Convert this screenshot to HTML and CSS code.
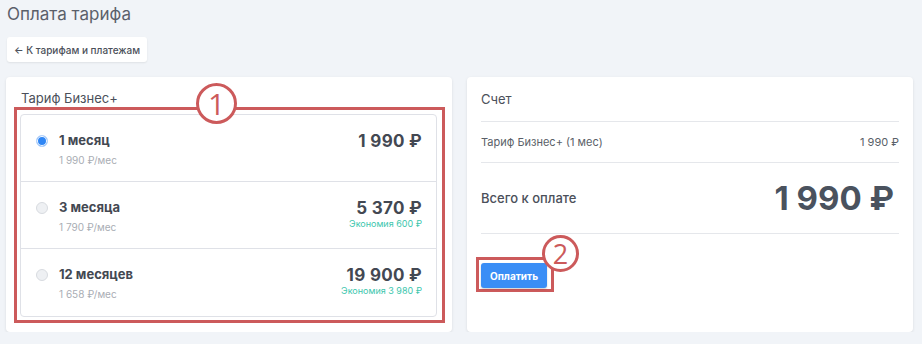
FILE: index.html
```html
<!DOCTYPE html>
<html lang="ru">
<head>
    <meta charset="UTF-8">
    <meta name="viewport" content="width=device-width, initial-scale=1.0">
    <title>Оплата тарифа</title>
    <link rel="stylesheet" href="styles.css">
</head>
<body>
    <h1 class="page-title">Оплата тарифа</h1>
    <button class="back">&larr; К тарифам и платежам</button>

    <div class="columns">
        <section class="card tariff">
            <h2>Тариф Бизнес+</h2>
            <div class="mark mark-plans">
                <span class="badge badge-1">1</span>
                <ul class="plans">
                    <li class="plan active">
                        <span class="radio"></span>
                        <div class="plan-info">
                            <div class="plan-name">1 месяц</div>
                            <div class="plan-month">1 990 ₽/мес</div>
                        </div>
                        <div class="plan-price">
                            <div class="price">1 990 ₽</div>
                        </div>
                    </li>
                    <li class="plan">
                        <span class="radio"></span>
                        <div class="plan-info">
                            <div class="plan-name">3 месяца</div>
                            <div class="plan-month">1 790 ₽/мес</div>
                        </div>
                        <div class="plan-price">
                            <div class="price">5 370 ₽</div>
                            <div class="saving">Экономия 600 ₽</div>
                        </div>
                    </li>
                    <li class="plan">
                        <span class="radio"></span>
                        <div class="plan-info">
                            <div class="plan-name">12 месяцев</div>
                            <div class="plan-month">1 658 ₽/мес</div>
                        </div>
                        <div class="plan-price">
                            <div class="price">19 900 ₽</div>
                            <div class="saving">Экономия 3 980 ₽</div>
                        </div>
                    </li>
                </ul>
            </div>
        </section>

        <section class="card bill">
            <div class="bill-head">Счет</div>
            <div class="bill-row">
                <span>Тариф Бизнес+ (1 мес)</span>
                <span>1 990 ₽</span>
            </div>
            <div class="bill-total">
                <span class="total-label">Всего к оплате</span>
                <span class="total-sum">1 990 ₽</span>
            </div>
            <div class="pay-wrap">
                <div class="mark mark-pay">
                    <span class="badge badge-2">2</span>
                    <button class="pay">Оплатить</button>
                </div>
            </div>
        </section>
    </div>
</body>
</html>
```

FILE: styles.css
```css
body {
    margin: 0;
    padding: 2px 9px 0 6px;
    background-color: #f1f4f8;
    font-family: Inter, "Noto Sans", sans-serif;
    color: #4b505a;
}

.page-title {
    margin: 0 0 0 1px;
    font-size: 17px;
    line-height: 24px;
    font-weight: 400;
    color: #5b606a;
}

.back {
    display: block;
    margin: 11px 0 0 1px;
    height: 25px;
    padding: 0 7px;
    background-color: #fff;
    border: none;
    border-radius: 3px;
    box-shadow: 0 1px 2px rgba(0, 0, 0, 0.08);
    font-family: inherit;
    font-size: 10px;
    font-weight: 500;
    color: #4b505a;
}

.columns {
    display: grid;
    grid-template-columns: 1fr 1fr;
    gap: 15px;
    margin-top: 15px;
}

.card {
    background-color: #fff;
    border-radius: 4px;
    box-shadow: 0 1px 3px rgba(0, 0, 0, 0.1);
}

/* annotation frames */
.mark {
    position: relative;
    border: 3px solid #cc5a5b;
}

.badge {
    position: absolute;
    display: flex;
    align-items: center;
    justify-content: center;
    background-color: #fff;
    border: 3px solid #cc5a5b;
    border-radius: 50%;
    color: #cc5a5b;
    font-family: "Open Sans", sans-serif;
    font-weight: 400;
    box-sizing: border-box;
}

.badge-1 {
    width: 41px;
    height: 41px;
    left: 179px;
    top: -27px;
    font-size: 30px;
}

.badge-2 {
    width: 37px;
    height: 37px;
    left: 63px;
    top: -25px;
    font-size: 27px;
}

/* left card */
.tariff {
    padding: 13px 7px 9px 8px;
}

.tariff h2 {
    margin: 0 0 0 7px;
    font-size: 13px;
    line-height: 17px;
    font-weight: 400;
    color: #4b505a;
}

.mark-plans {
    padding: 4px 5px 3px 3px;
}

.plans {
    list-style: none;
    margin: 0;
    padding: 0;
    border: 1px solid #dfe1e7;
    border-radius: 4px;
}

.plan {
    display: flex;
    align-items: flex-start;
    height: 67px;
    padding: 16px 14px 0 15px;
    box-sizing: border-box;
    border-bottom: 1px solid #dfe1e7;
}

.plan:last-child {
    border-bottom: none;
}

.radio {
    width: 10px;
    height: 10px;
    margin: 4px 11px 0 0;
    border: 1px solid #d8dbe0;
    border-radius: 50%;
    background-color: #eef0f3;
    flex-shrink: 0;
}

.plan.active .radio {
    background-color: #2f86f5;
    border-color: #b8d5fb;
    box-shadow: inset 0 0 0 1px #fff;
}

.plan-info {
    flex: 1;
}

.plan-name {
    font-size: 13px;
    line-height: 18px;
    font-weight: 700;
    color: #434852;
}

.plan-month {
    margin-top: 5px;
    font-size: 10px;
    color: #a9adb4;
}

.plan-price {
    text-align: right;
}

.price {
    font-size: 17px;
    line-height: 20px;
    font-weight: 700;
    letter-spacing: 0.3px;
    color: #434852;
}

.saving {
    font-size: 9px;
    line-height: 11px;
    color: #3cc6ad;
}

/* right card */
.bill {
    padding: 0 14px;
}

.bill-head {
    height: 44px;
    display: flex;
    align-items: center;
    font-size: 13px;
    border-bottom: 1px solid #e5e7eb;
}

.bill-row {
    height: 40px;
    display: flex;
    align-items: center;
    justify-content: space-between;
    font-size: 11px;
    color: #5a5f68;
    border-bottom: 1px solid #e5e7eb;
}

.bill-total {
    height: 70px;
    display: flex;
    align-items: center;
    justify-content: space-between;
    border-bottom: 1px solid #e5e7eb;
}

.total-label {
    font-size: 13px;
    font-weight: 500;
    color: #4b505a;
}

.total-sum {
    margin-right: 5px;
    font-size: 33px;
    font-weight: 700;
    color: #4a525e;
}

.pay-wrap {
    display: flex;
    margin: 23px 0 0 -5px;
}

.mark-pay {
    padding: 3px 4px 1px 2px;
}

.pay {
    display: block;
    height: 25px;
    padding: 0 9px;
    background-color: #3a8ef6;
    border: none;
    border-radius: 3px;
    box-shadow: 0 1px 2px rgba(0, 0, 0, 0.2);
    font-family: inherit;
    font-size: 10px;
    font-weight: 700;
    color: #fff;
}
```
